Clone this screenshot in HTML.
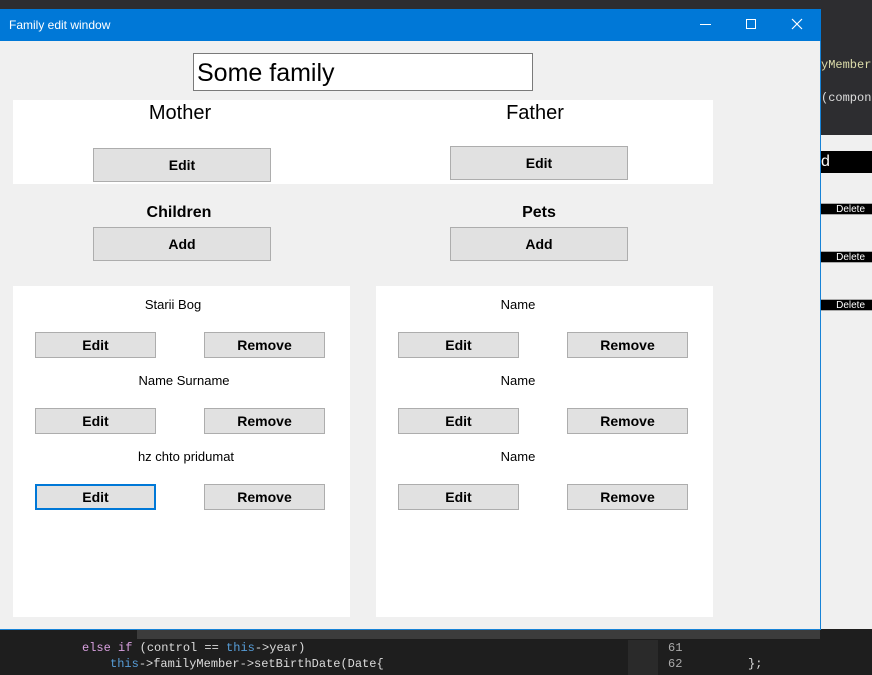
<!DOCTYPE html>
<html><head><meta charset="utf-8"><style>
*{margin:0;padding:0;box-sizing:border-box}
body{width:872px;height:675px;overflow:hidden;background:#1e1e1e;position:relative;font-family:"Liberation Sans",Arial,sans-serif}
.a{position:absolute}
.btn{position:absolute;background:#e1e1e1;border:1px solid #adadad;font-weight:bold;font-size:14px;color:#000;display:flex;align-items:center;justify-content:center}
.c{position:absolute;text-align:center;color:#000}
.del{position:absolute;left:821px;width:51px;height:12px;background:#000;color:#fff;font-size:10px;text-align:right;padding-right:7px;line-height:12px;border-top:1px solid #aaa;border-bottom:1px solid #aaa}
</style></head><body>
<div class="a" style="left:0;top:0;width:872px;height:9px;background:#2d2d30"></div>
<div class="a" style="left:821px;top:9px;width:51px;height:126px;background:#2d2d30"></div>
<div class="a" style="left:821px;top:55px;width:51px;height:20px;color:#dcdcaa;font-family:'Liberation Mono',monospace;font-size:12px;line-height:20px">yMemberE</div>
<div class="a" style="left:821px;top:88px;width:51px;height:20px;color:#ddd;font-family:'Liberation Mono',monospace;font-size:12px;line-height:20px">(compon</div>
<div class="a" style="left:821px;top:135px;width:51px;height:540px;background:#f0f0f0"></div>
<div class="a" style="left:821px;top:151px;width:51px;height:22px;background:#000;color:#fff;font-size:16px;line-height:22px">d</div>
<div class="del" style="top:203px">Delete</div>
<div class="del" style="top:251px">Delete</div>
<div class="del" style="top:299px">Delete</div>
<div class="a" style="left:0;top:629px;width:872px;height:46px;background:#1e1e1e"></div>
<div class="a" style="left:137px;top:629px;width:683px;height:10px;background:#3c3c3c"></div>
<div class="a" style="left:628px;top:640px;width:30px;height:35px;background:#2a2a2a"></div>
<div class="a" style="left:82px;top:641px;font-family:'Liberation Mono',monospace;font-size:12px;color:#dcdcdc;white-space:pre"><span style="color:#d8a0df">else if</span> (control == <span style="color:#569cd6">this</span>-&gt;year)</div>
<div class="a" style="left:110px;top:657px;font-family:'Liberation Mono',monospace;font-size:12px;color:#dcdcdc;white-space:pre"><span style="color:#569cd6">this</span>-&gt;familyMember-&gt;setBirthDate(Date{</div>
<div class="a" style="left:668px;top:641px;font-family:'Liberation Mono',monospace;font-size:12px;color:#aaa">61</div>
<div class="a" style="left:668px;top:657px;font-family:'Liberation Mono',monospace;font-size:12px;color:#aaa">62</div>
<div class="a" style="left:748px;top:657px;font-family:'Liberation Mono',monospace;font-size:12px;color:#dcdcdc">};</div>

<div class="a" style="left:0;top:9px;width:821px;height:621px;background:#f0f0f0;border-right:1px solid #1883d7;border-bottom:1px solid #1883d7"></div>
<div class="a" style="left:0;top:9px;width:821px;height:32px;background:#0078d7;color:#fff;font-size:12px;line-height:32px;padding-left:9px">Family edit window</div>
<div class="a" style="left:700px;top:24px;width:11px;height:1px;background:#fff"></div>
<div class="a" style="left:746px;top:19px;width:10px;height:10px;border:1px solid #fff"></div>
<svg class="a" style="left:791px;top:18px" width="12" height="12"><path d="M1 1L11 11M11 1L1 11" stroke="#fff" stroke-width="1.2"/></svg>

<div class="a" style="left:193px;top:53px;width:340px;height:38px;background:#fff;border:1px solid #7a7a7a;font-size:25px;line-height:38px;padding-left:3px">Some family</div>
<div class="a" style="left:13px;top:100px;width:700px;height:84px;background:#fff"></div>
<div class="c" style="left:80px;top:102px;width:200px;font-size:20px">Mother</div>
<div class="c" style="left:435px;top:102px;width:200px;font-size:20px">Father</div>
<div class="btn" style="left:93px;top:148px;width:178px;height:34px">Edit</div>
<div class="btn" style="left:450px;top:146px;width:178px;height:34px">Edit</div>
<div class="c" style="left:79px;top:204px;width:200px;font-size:16px;font-weight:bold">Children</div>
<div class="c" style="left:439px;top:204px;width:200px;font-size:16px;font-weight:bold">Pets</div>
<div class="btn" style="left:93px;top:227px;width:178px;height:34px">Add</div>
<div class="btn" style="left:450px;top:227px;width:178px;height:34px">Add</div>

<div class="a" style="left:13px;top:286px;width:337px;height:331px;background:#fff"></div>
<div class="a" style="left:376px;top:286px;width:337px;height:331px;background:#fff"></div>

<div class="c" style="left:73px;top:297px;width:200px;font-size:13px">Starii Bog</div>
<div class="btn" style="left:35px;top:332px;width:121px;height:26px">Edit</div>
<div class="btn" style="left:204px;top:332px;width:121px;height:26px">Remove</div>
<div class="c" style="left:84px;top:373px;width:200px;font-size:13px">Name Surname</div>
<div class="btn" style="left:35px;top:408px;width:121px;height:26px">Edit</div>
<div class="btn" style="left:204px;top:408px;width:121px;height:26px">Remove</div>
<div class="c" style="left:86px;top:449px;width:200px;font-size:13px">hz chto pridumat</div>
<div class="btn" style="left:35px;top:484px;width:121px;height:26px;border:2px solid #0078d7">Edit</div>
<div class="btn" style="left:204px;top:484px;width:121px;height:26px">Remove</div>

<div class="c" style="left:418px;top:297px;width:200px;font-size:13px">Name</div>
<div class="btn" style="left:398px;top:332px;width:121px;height:26px">Edit</div>
<div class="btn" style="left:567px;top:332px;width:121px;height:26px">Remove</div>
<div class="c" style="left:418px;top:373px;width:200px;font-size:13px">Name</div>
<div class="btn" style="left:398px;top:408px;width:121px;height:26px">Edit</div>
<div class="btn" style="left:567px;top:408px;width:121px;height:26px">Remove</div>
<div class="c" style="left:418px;top:449px;width:200px;font-size:13px">Name</div>
<div class="btn" style="left:398px;top:484px;width:121px;height:26px">Edit</div>
<div class="btn" style="left:567px;top:484px;width:121px;height:26px">Remove</div>
</body></html>
